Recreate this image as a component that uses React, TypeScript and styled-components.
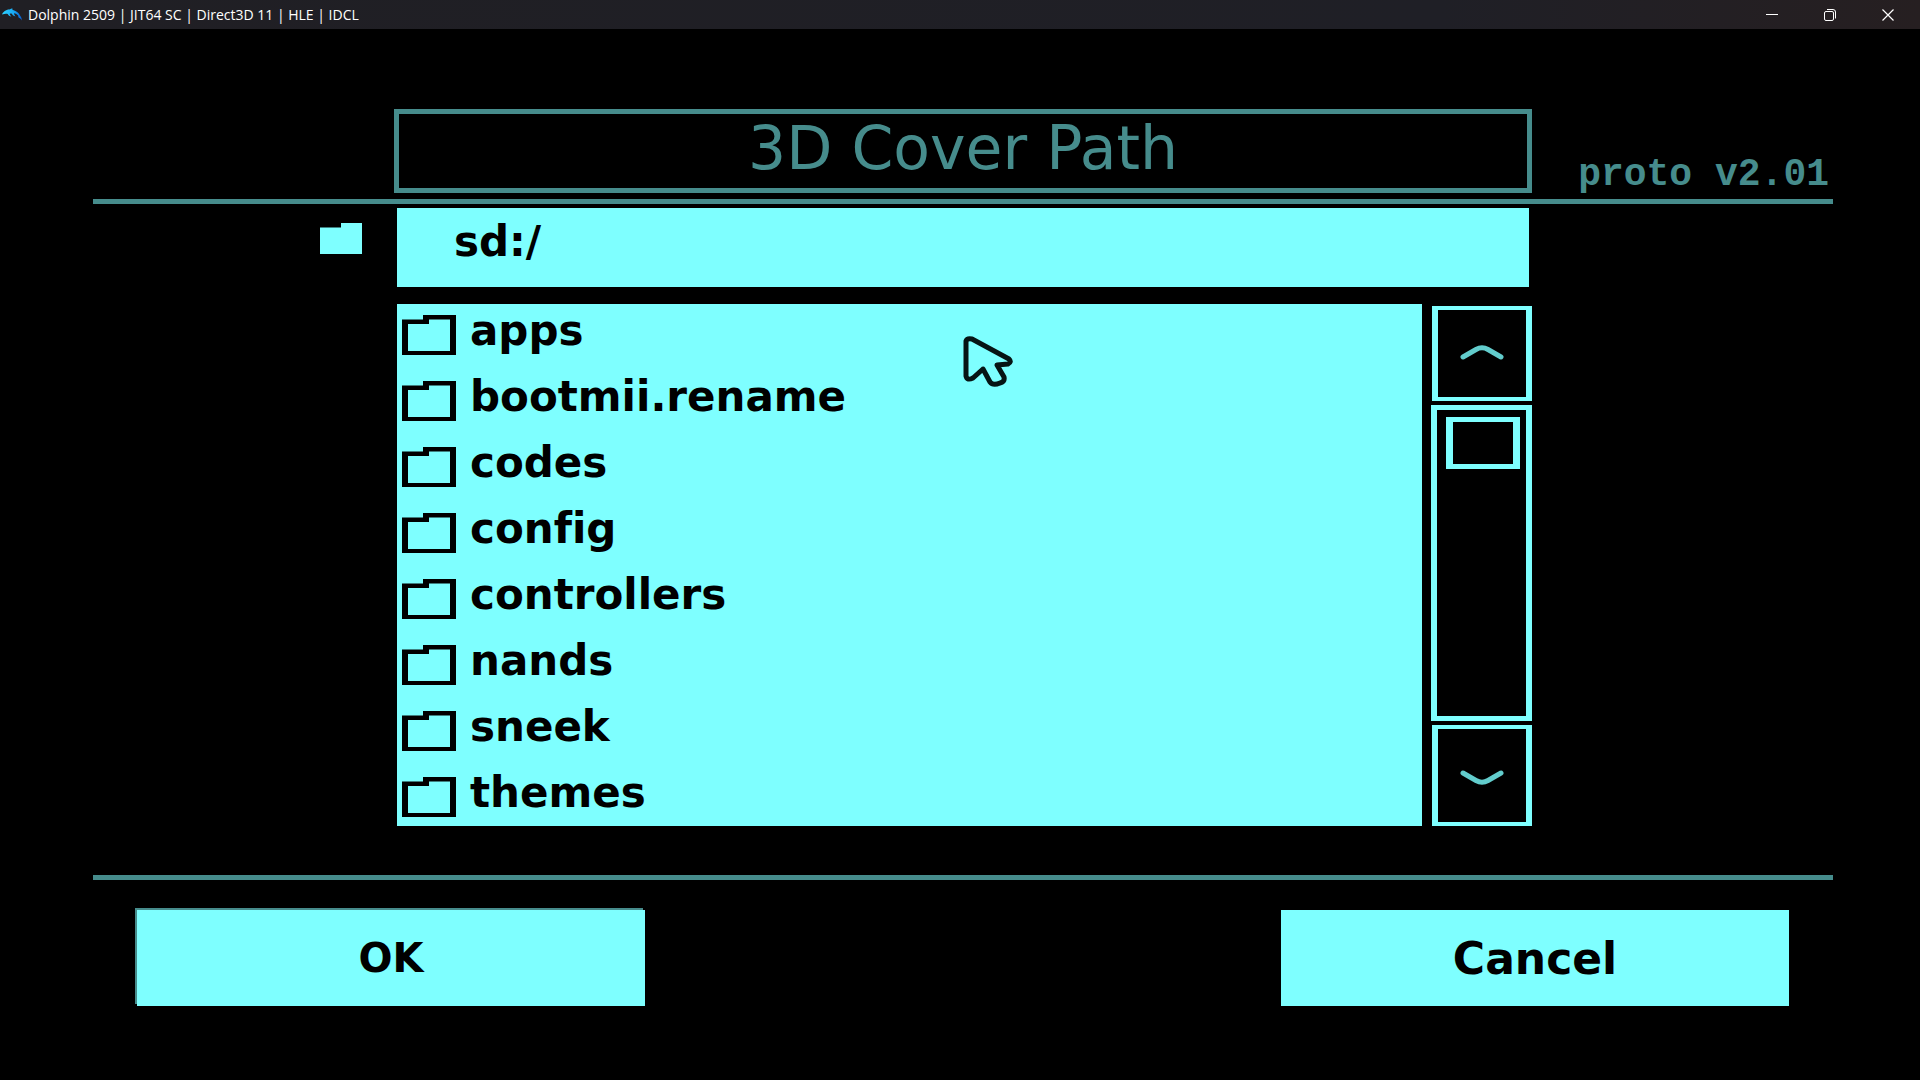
import React, { useState } from "react";
import styled, { createGlobalStyle } from "styled-components";

const CYAN = "#7effff";
const TEAL = "#468c8c";
const DISPLAY = '"DejaVu Sans", Verdana, sans-serif';

const GlobalStyle = createGlobalStyle`
  * { box-sizing: border-box; }
  body { margin: 0; background: #000; }
  button, input { font: inherit; margin: 0; padding: 0; border: 0; border-radius: 0; }
  button:focus-visible, input:focus-visible { outline: 2px solid ${TEAL}; }
`;

const Window = styled.div`
  position: relative;
  min-height: 100vh;
  background: #000;
  font-family: ${DISPLAY};
  font-variant-ligatures: none;
`;

const TitleBar = styled.header`
  display: flex;
  align-items: center;
  height: 29px;
  padding: 0 3px 0 2px;
  gap: 6px;
  background: linear-gradient(90deg, #201f24 0%, #1f1f26 75%, #261f21 100%);
  color: #fff;
  font-family: "Open Sans", "Segoe UI", sans-serif;
  font-size: 14px;
`;

const WindowTitle = styled.span`
  flex: 1;
  line-height: 20px;
`;

const WindowControls = styled.div`
  display: flex;
`;

const WindowButton = styled.button`
  display: grid;
  place-items: center;
  width: 58px;
  height: 28px;
  background: transparent;
  color: #fff;
`;

const Screen = styled.main`
  padding: 80px 87px 0 93px;
`;

const Heading = styled.div`
  display: grid;
  grid-template-columns: 301px minmax(0, 1fr) 301px;
  align-items: end;
  color: ${TEAL};
`;

const TitleFrame = styled.h1`
  grid-column: 2;
  display: flex;
  align-items: center;
  justify-content: center;
  height: 84px;
  margin: 0;
  padding-bottom: 6px;
  border: 5px solid ${TEAL};
  font-size: 60px;
  font-weight: 400;
  line-height: 64px;
`;

const Version = styled.span`
  padding: 0 4px 2px 0;
  text-align: right;
  font-family: "Liberation Mono", monospace;
  font-size: 38px;
  font-weight: 700;
  line-height: 32px;
`;

const Rule = styled.hr<{ $above: number }>`
  height: 5px;
  margin: ${(p) => p.$above}px 0 0;
  border: 0;
  background: ${TEAL};
`;

const Browser = styled.section`
  display: grid;
  grid-template-columns: 304px minmax(0, 1fr) 301px;
  row-gap: 17px;
  padding-top: 4px;
`;

const PathLabel = styled.label`
  display: flex;
  justify-content: flex-end;
  padding: 15px 35px 0 0;
`;

const PathInput = styled.input`
  height: 79px;
  margin-right: 3px;
  padding: 0 20px 12px 57px;
  background: ${CYAN};
  color: #000;
  font-size: 42px;
  font-weight: 700;
`;

const Listing = styled.div`
  grid-column: 2;
  display: flex;
  gap: 9px;
`;

const FileList = styled.ul`
  flex: 1;
  display: flex;
  flex-direction: column;
  gap: 26px;
  margin: 0;
  padding: 11px 5px 9px;
  background: ${CYAN};
  list-style: none;
`;

const FileRow = styled.button`
  display: flex;
  align-items: flex-start;
  gap: 14px;
  width: 100%;
  height: 40px;
  background: transparent;
  color: #000;
  font-size: 42px;
  font-weight: 700;
  line-height: 32px;
  text-align: left;
`;

const Scroller = styled.div`
  display: flex;
  flex-direction: column;
  gap: 4px;
  width: 101px;
  padding-top: 2px;
`;

const ScrollButton = styled.button<{ $height: number }>`
  display: grid;
  place-items: center;
  height: ${(p) => p.$height}px;
  margin-left: 1px;
  border: solid ${CYAN};
  border-width: 4px 6px;
  background: #000;
`;

const Track = styled.div`
  flex: 1;
  padding: 7px 6px 0 9px;
  border: solid ${CYAN};
  border-width: 5px 6px;
`;

const Thumb = styled.div`
  height: 52px;
  border: solid ${CYAN};
  border-width: 5px 7px;
`;

const Actions = styled.footer`
  display: flex;
  justify-content: space-between;
  padding: 30px 44px 0;
`;

const ActionButton = styled.button<{ $size: number; $raised?: boolean }>`
  width: 508px;
  height: 96px;
  background: ${CYAN};
  box-shadow: ${(p) => (p.$raised ? `-2px -2px 0 ${TEAL}` : "none")};
  color: #000;
  font-size: ${(p) => p.$size}px;
  font-weight: 700;
`;

const Pointer = styled.svg`
  position: absolute;
  left: 962px;
  top: 335px;
  pointer-events: none;
`;

const DolphinLogo = () => (
  <svg width="20" height="14" viewBox="0 0 20 14" aria-hidden="true">
    <defs>
      <linearGradient id="dolphin" x1="0" x2="1">
        <stop offset="0" stopColor="#2fd4ff" />
        <stop offset="0.6" stopColor="#17a8f5" />
        <stop offset="1" stopColor="#0a5fd8" />
      </linearGradient>
    </defs>
    <path
      fill="url(#dolphin)"
      d="M0 6.4 C.8 4.4 2.2 3 4.2 2.2 C5.8 1.5 7 1.5 8 1.3 C8.8 .9 9.4 .4 10.6 .5 C10.1 1.1 10.3 1.6 11 1.9 C14.6 3 17 5 18 7.6 C18.9 8.8 19.8 10.2 19.8 12.4 C18.8 10.8 17.8 10 16.6 9.6 C16.2 8.9 16.4 8.2 16.2 7.6 C15 6.2 13.8 5.4 12 5.2 C12.2 6.6 12.8 7.6 13.8 8.6 C11.8 8.2 10.4 7 9.6 5.6 C8.8 5.6 8.3 5.7 7.6 5.7 C8 7 8.6 7.6 9.4 8.6 C7.6 8.2 6.4 7.2 5.8 5.9 C3.8 5.4 2.2 5.8 0 6.4 Z"
    />
  </svg>
);

const FolderOutline = () => (
  <svg width="54" height="40" viewBox="0 0 54 40" aria-hidden="true">
    <path fill="#000" fillRule="evenodd" d="M0 4.5H21V0H54V40H0ZM6 9V36H48V4.5H27V9Z" />
  </svg>
);

const FolderSolid = () => (
  <svg width="42" height="31" viewBox="0 0 42 31" role="img" aria-label="Path">
    <path fill={CYAN} d="M0 4.5H21V0H42V31H0Z" />
  </svg>
);

const Chevron = ({ down }: { down?: boolean }) => (
  <svg width="46" height="20" viewBox="0 0 46 20" aria-hidden="true">
    <path
      fill="none"
      stroke="#62cccc"
      strokeWidth="5"
      strokeLinecap="round"
      strokeLinejoin="round"
      d={down ? "M4 7L17 14.5Q23 18 29 14.5L42 7" : "M4 13L17 5.5Q23 2 29 5.5L42 13"}
    />
  </svg>
);

const folders = ["apps", "bootmii.rename", "codes", "config", "controllers", "nands", "sneek", "themes"];

export default function App() {
  const [path, setPath] = useState("sd:/");

  return (
    <Window>
      <GlobalStyle />
      <TitleBar>
        <DolphinLogo />
        <WindowTitle>Dolphin 2509 | JIT64 SC | Direct3D 11 | HLE | IDCL</WindowTitle>
        <WindowControls>
          <WindowButton aria-label="Minimize">
            <svg width="12" height="12" viewBox="0 0 12 12">
              <path d="M0 5.5H12" stroke="currentColor" />
            </svg>
          </WindowButton>
          <WindowButton aria-label="Restore">
            <svg width="12" height="12" viewBox="0 0 12 12" fill="none" stroke="currentColor">
              <rect x=".5" y="2.5" width="9" height="9" rx="1.5" />
              <path d="M3 .5H9Q11.5 .5 11.5 3V9.5" />
            </svg>
          </WindowButton>
          <WindowButton aria-label="Close">
            <svg width="12" height="12" viewBox="0 0 12 12" stroke="currentColor" strokeWidth="1.2">
              <path d="M.5 .5L11.5 11.5M11.5 .5L.5 11.5" />
            </svg>
          </WindowButton>
        </WindowControls>
      </TitleBar>

      <Screen>
        <Heading>
          <TitleFrame>3D Cover Path</TitleFrame>
          <Version>proto v2.01</Version>
        </Heading>
        <Rule $above={6} />

        <Browser>
          <PathLabel htmlFor="path">
            <FolderSolid />
          </PathLabel>
          <PathInput id="path" value={path} onChange={(e) => setPath(e.target.value)} />
          <Listing>
            <FileList>
              {folders.map((name) => (
                <li key={name}>
                  <FileRow onClick={() => setPath(`sd:/${name}`)}>
                    <FolderOutline />
                    {name}
                  </FileRow>
                </li>
              ))}
            </FileList>
            <Scroller>
              <ScrollButton $height={95} aria-label="Scroll up">
                <Chevron />
              </ScrollButton>
              <Track>
                <Thumb />
              </Track>
              <ScrollButton $height={101} aria-label="Scroll down">
                <Chevron down />
              </ScrollButton>
            </Scroller>
          </Listing>
        </Browser>

        <Rule $above={49} />
        <Actions>
          <ActionButton $size={40} $raised>
            OK
          </ActionButton>
          <ActionButton $size={44}>Cancel</ActionButton>
        </Actions>
      </Screen>

      <Pointer width="52" height="54" viewBox="0 0 52 54" aria-hidden="true">
        <path
          fill={CYAN}
          stroke="#061414"
          strokeWidth="5"
          strokeLinejoin="round"
          d="M4 6Q5 3 10 4L47 24Q50 27 46 29L35 30L42 42Q43 47 38 48Q31 51 28 47L21 34L11 43Q5 46 4 41Z"
        />
      </Pointer>
    </Window>
  );
}
